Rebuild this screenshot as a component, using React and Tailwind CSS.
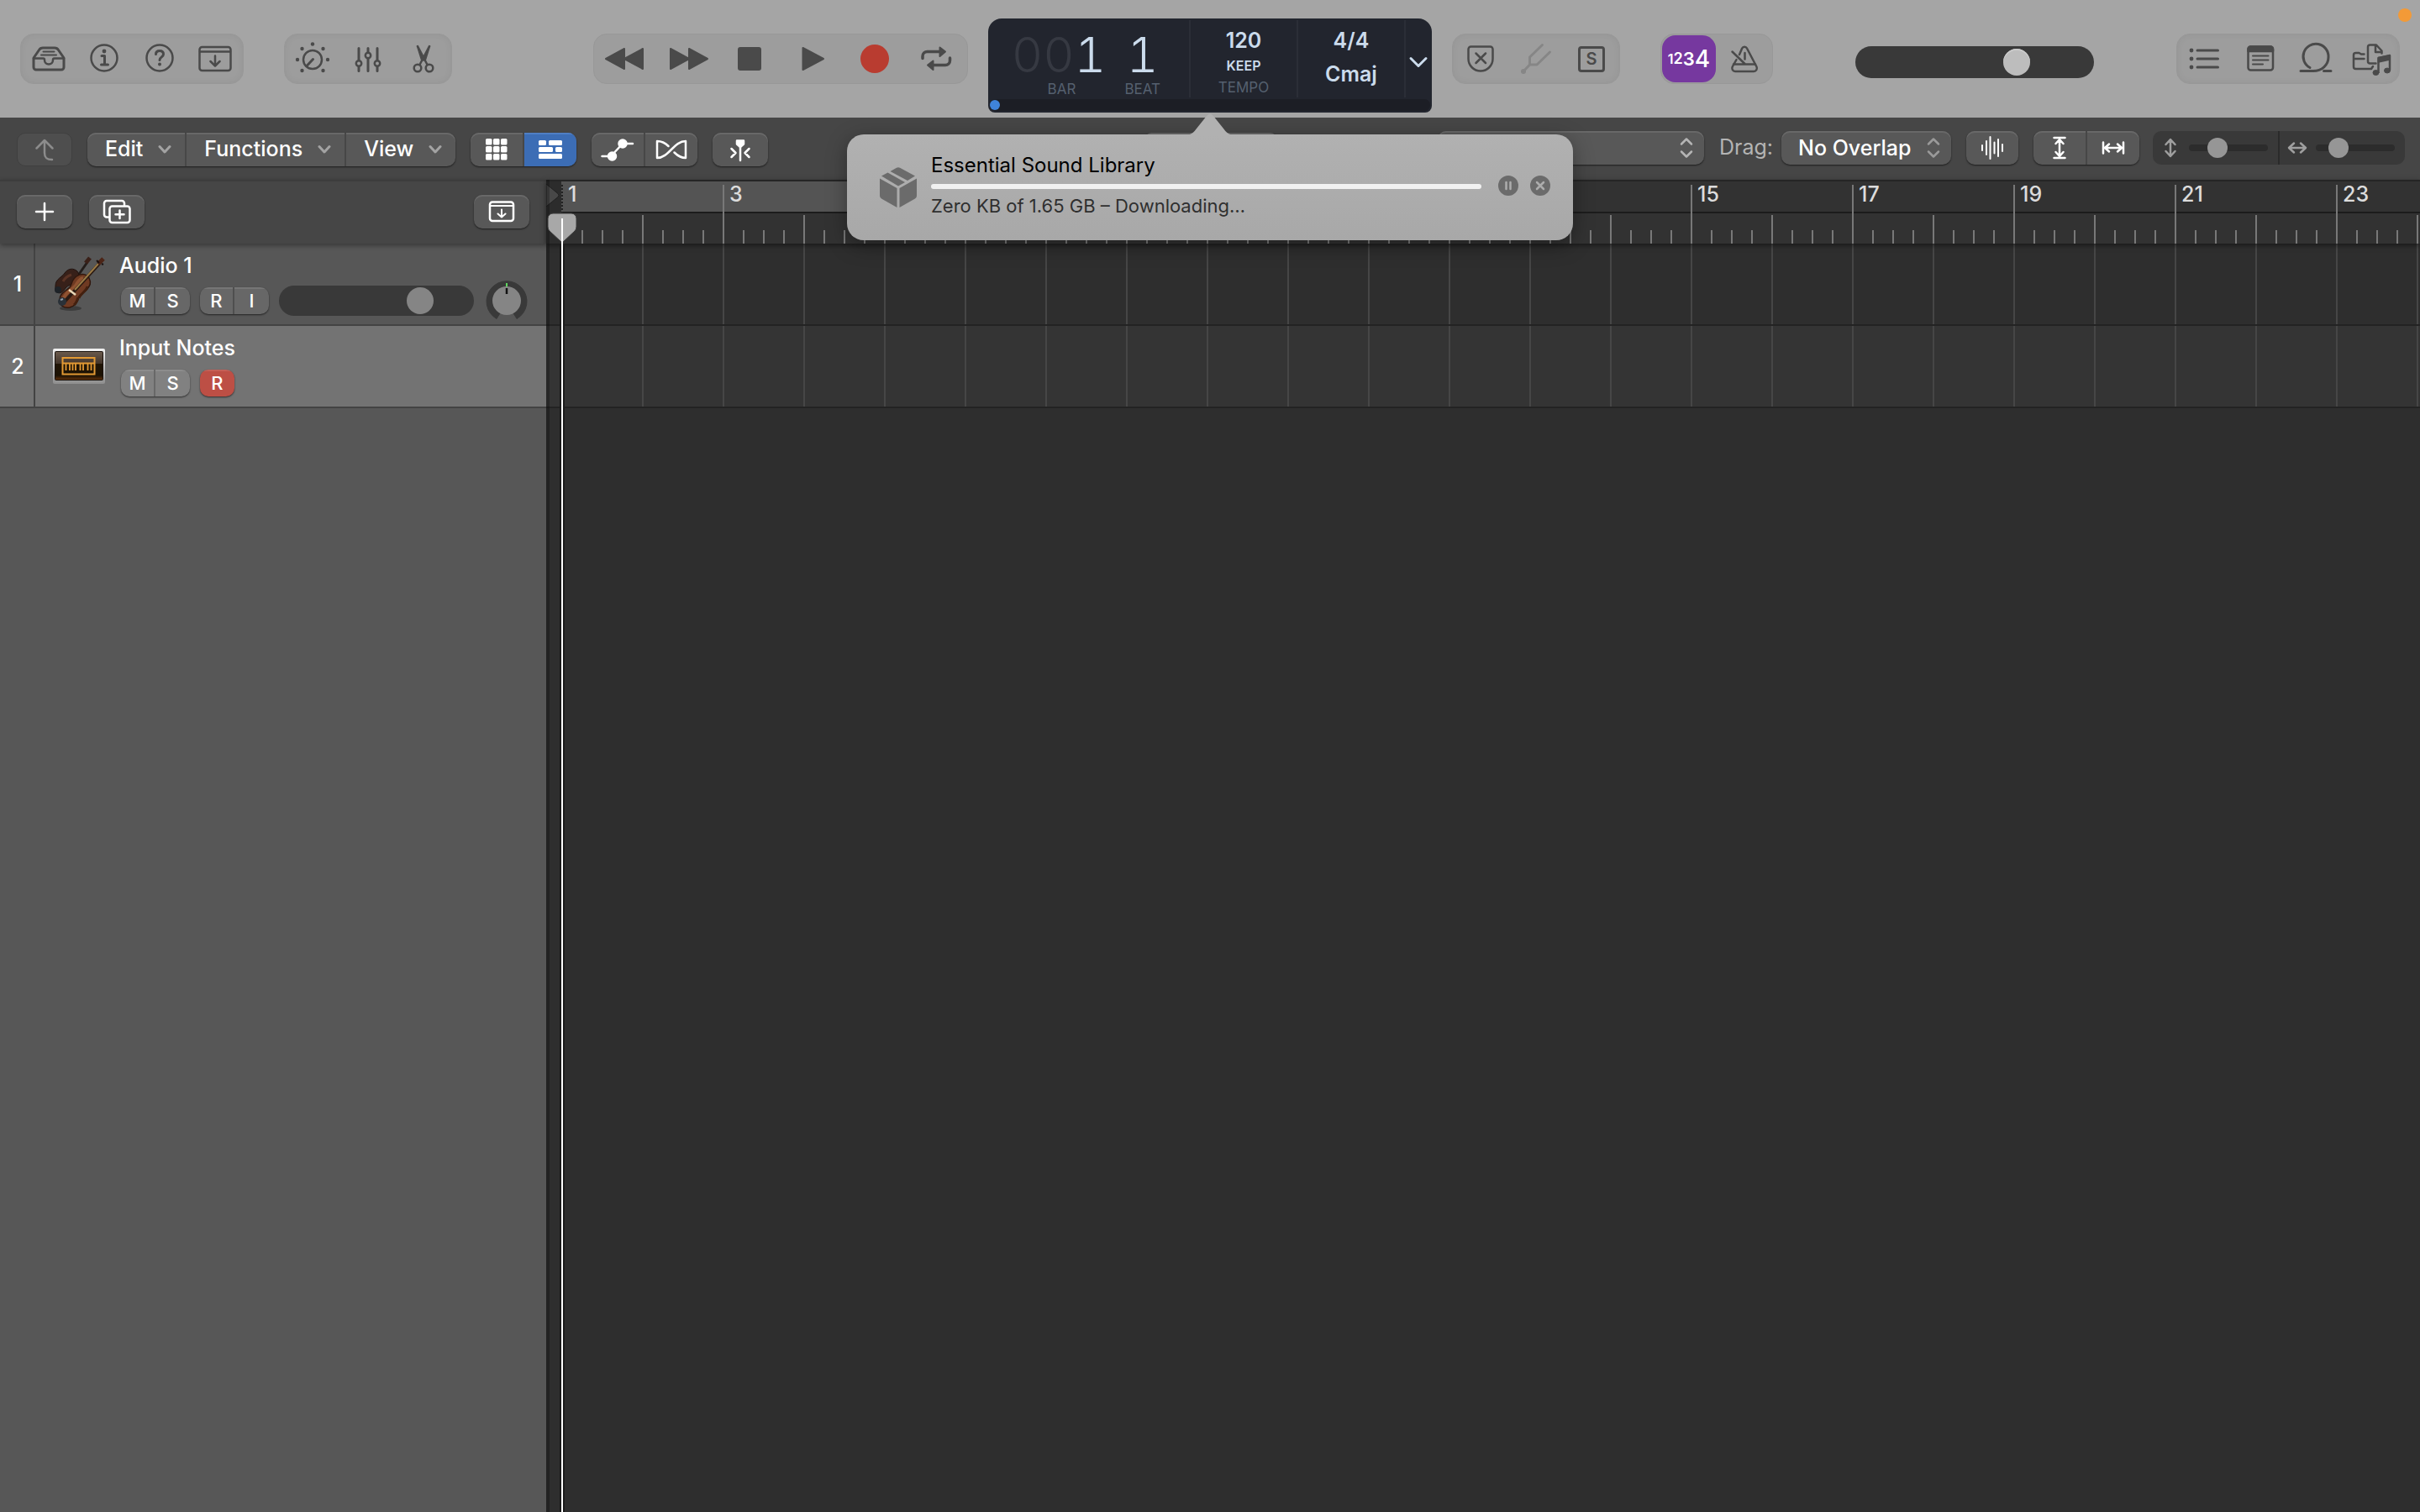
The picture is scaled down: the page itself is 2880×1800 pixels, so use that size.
import { useState } from "react";

const BARS = Array.from({ length: 24 }, (_, i) => i + 1);
const CYCLE_END = 8;
// bars whose labels sit under the download popover
const COVERED = [5, 7, 9, 11, 13];

const Icon = ({ children, w = 44, h = 44, stroke = 3, className = "" }) => (
  <svg
    width={w}
    height={h}
    viewBox={`0 0 ${w} ${h}`}
    fill="none"
    stroke="currentColor"
    strokeWidth={stroke}
    strokeLinecap="round"
    strokeLinejoin="round"
    className={`shrink-0 ${className}`}
    aria-hidden="true"
  >
    {children}
  </svg>
);

const InboxIcon = () => (
  <Icon>
    <path d="M4 21 10.5 11.5Q12 9 15 9H29Q32 9 33.5 11.5L40 21V32a3 3 0 0 1-3 3H7a3 3 0 0 1-3-3Z" />
    <path d="M4 21.5H15.5c1 0 1.5.8 1.5 2a5 5 0 0 0 10 0c0-1.2.5-2 1.5-2H40" strokeWidth="2.5" />
    <path d="M15.5 13.5H28.5M13 17.5H31" strokeWidth="2" />
  </Icon>
);

const InfoIcon = () => (
  <Icon>
    <circle cx="22" cy="21" r="15.5" strokeWidth="2.5" />
    <circle cx="22" cy="13" r="2.4" fill="currentColor" stroke="none" />
    <path d="M19 18.5h3.5V29M18.5 29h8" />
  </Icon>
);

const HelpIcon = () => (
  <Icon>
    <circle cx="22" cy="21" r="15.5" strokeWidth="2.5" />
    <path d="M17.5 16.5c0-2.5 1.8-4 4.5-4s4.5 1.6 4.5 4c0 3.5-4.5 3.3-4.5 7" />
    <circle cx="22" cy="28.5" r="2" fill="currentColor" stroke="none" />
  </Icon>
);

const DownloadWindowIcon = () => (
  <Icon stroke={2.5}>
    <rect x="3.5" y="8" width="37" height="28" rx="3" />
    <path d="M4 13.5H40M22 18.5V30M16.5 25 22 30.5 27.5 25" />
  </Icon>
);

const KnobIcon = () => (
  <Icon>
    <circle cx="22" cy="23" r="11" strokeWidth="2.5" />
    <path d="M22.5 22.5 15 30.5" />
    <g fill="currentColor" stroke="none">
      <circle cx="22" cy="4.5" r="2.2" />
      <circle cx="9.5" cy="10" r="2.2" />
      <circle cx="34.5" cy="10" r="2.2" />
      <circle cx="4" cy="23" r="2.2" />
      <circle cx="40" cy="23" r="2.2" />
      <circle cx="9.5" cy="36" r="2.2" />
      <circle cx="34.5" cy="36" r="2.2" />
    </g>
  </Icon>
);

const MixerIcon = () => (
  <Icon>
    <path d="M11 9.5V23M11 32v4.5M22 9.5v5M22 22V36.5M33 9.5V23M33 32v4.5" />
    <g strokeWidth="2.5">
      <circle cx="11" cy="27.5" r="3.2" />
      <circle cx="22" cy="18" r="3.2" />
      <circle cx="33" cy="27.5" r="3.2" />
    </g>
  </Icon>
);

const ScissorsIcon = () => (
  <Icon stroke={2.5}>
    <path d="M15 7 26.5 29M29 7 17.5 29" />
    <path d="M14.5 7 22.5 24 19.5 23ZM29.5 7 21.5 24 24.5 23Z" fill="currentColor" strokeWidth="1.5" />
    <circle cx="15" cy="33" r="4.3" />
    <circle cx="29" cy="33" r="4.3" />
  </Icon>
);

const RewindIcon = () => (
  <Icon w={52} stroke={2}>
    <path d="M25 10v24L3 22ZM47 10v24L25 22Z" fill="currentColor" />
  </Icon>
);

const ForwardIcon = () => (
  <Icon w={52} stroke={2}>
    <path d="M6 10v24l22-12ZM28 10v24l22-12Z" fill="currentColor" />
  </Icon>
);

const StopIcon = () => (
  <Icon>
    <rect x="8" y="8" width="28" height="28" rx="3" fill="currentColor" stroke="none" />
  </Icon>
);

const PlayIcon = () => (
  <Icon stroke={2}>
    <path d="M11.5 9v26L36 22Z" fill="currentColor" />
  </Icon>
);

const RecordIcon = () => (
  <Icon className="text-[#b93c30]">
    <circle cx="23" cy="22" r="17" fill="currentColor" stroke="none" />
  </Icon>
);

const CycleIcon = () => (
  <Icon stroke={3.5}>
    <path d="M6 21.5V19a5.5 5.5 0 0 1 5.5-5.5H26M38.5 21v3a5.5 5.5 0 0 1-5.5 5.5H19" />
    <path d="M26.5 8.5 33 13.5 26.5 19ZM18.5 24.5 12 29.5l6.5 5.5Z" fill="currentColor" strokeWidth="2" />
  </Icon>
);

const ShieldIcon = () => (
  <Icon stroke={2.5}>
    <path d="M10.5 7.5h23A3 3 0 0 1 36.5 10.5V22a14.5 14.5 0 0 1-29 0V10.5A3 3 0 0 1 10.5 7.5Z" />
    <path d="M16.5 15.5 28 27M28 15.5 16.5 27" />
  </Icon>
);

const TuningForkIcon = () => (
  <Icon className="text-[#868686]">
    <circle cx="7" cy="37" r="3" fill="currentColor" stroke="none" />
    <path d="M7 37 14.5 29V20L29.5 5.5M14.5 29H23L38.5 14" />
  </Icon>
);

const MetronomeIcon = () => (
  <Icon stroke={2.5}>
    <path d="M16 17 19.2 9.5a3.2 3.2 0 0 1 5.8 0L36.5 31.5a3.8 3.8 0 0 1-3.3 5.5H11a3.8 3.8 0 0 1-3.3-5.5L12.5 23" />
    <path d="M9 28.5H35M7.5 13.5 22.5 28M22.5 15v7.5" />
  </Icon>
);

const ListIcon = () => (
  <Icon>
    <path d="M13 12H37.5M13 22H37.5M13 32H37.5" />
    <g fill="currentColor" stroke="none">
      <circle cx="6" cy="12" r="2.4" />
      <circle cx="6" cy="22" r="2.4" />
      <circle cx="6" cy="32" r="2.4" />
    </g>
  </Icon>
);

const NotepadIcon = () => (
  <Icon stroke={2.5}>
    <rect x="7.5" y="7.5" width="29.5" height="28" rx="3" />
    <path d="M7.5 13V10a3 3 0 0 1 3-2.5H34A3 3 0 0 1 37 10v3Z" fill="currentColor" />
    <path d="M13 18.5H31.5M13 23.5H31.5M13 28.5H25" strokeWidth="2" />
  </Icon>
);

const LoopIcon = () => (
  <Icon>
    <path d="M4 36.5H19c10 0 18-7 18-16.5a15 15 0 1 0-22 12.5M31.5 36.5H40" />
  </Icon>
);

const MediaIcon = () => (
  <Icon w={48} stroke={2.5}>
    <path d="M15.5 16.5H12L9.5 15H5.5A2.5 2.5 0 0 0 3 17.5V31.5A2.5 2.5 0 0 0 5.5 34H24l2-3M3 22H15.5" />
    <path d="M29.5 27.5H22.5A2.5 2.5 0 0 1 20 25V8a2.5 2.5 0 0 1 2.5-2.5H30L36.5 12.5V15.5M29 6v8H36.5" />
    <path d="M32.5 38V21L46 18V35" />
    <path d="M32.5 20.5 46 18v5L32.5 26Z" fill="currentColor" strokeWidth="1.5" />
    <ellipse cx="29.5" cy="38.5" rx="3.5" ry="3" fill="currentColor" strokeWidth="1" />
    <ellipse cx="43" cy="36" rx="3.5" ry="3" fill="currentColor" strokeWidth="1" />
  </Icon>
);

const ChevronDown = () => (
  <Icon w={16} h={12} className="text-[#a3a3a3]">
    <path d="M2 2.5 8 9l6-6.5" />
  </Icon>
);

const UpDown = ({ className }) => (
  <Icon w={18} h={28} stroke={2.5} className={`pointer-events-none absolute right-3 top-1/2 -translate-y-1/2 ${className}`}>
    <path d="M3 9.5 9 3.5l6 6M3 18.5l6 6 6-6" />
  </Icon>
);

const ViolinIcon = () => (
  <svg width="64" height="66" viewBox="0 0 64 66" aria-hidden="true" className="shrink-0">
    <path d="M24 33 42 7" stroke="#241d1a" strokeWidth="3" />
    <path d="M40 8 45 2" stroke="#3a2018" strokeWidth="5" />
    <path
      d="M4 35C4 27 12 25 15 20c4-6 11-6 15-2 4 5 0 8-3 12-4 5-8 4-11 8-3 5-7 7-10 5-3-2-2-5-2-8Z"
      fill="#372019"
      stroke="#21130f"
    />
    <path d="M13 30c2-4 7-7 10-8" stroke="#5a3325" strokeWidth="3" fill="none" />
    <circle cx="7" cy="40" r="4" fill="#1e2328" />
    <ellipse cx="22" cy="62" rx="13" ry="3" fill="#000" opacity=".3" />
    <path
      d="M9 52c0-8 7-10 12-15 3-4 2-9 8-13 6-4 12-3 15 2 3 6 1 9-2 13-3 4-7 4-10 9-1 6-4 11-11 13-7 1-12-2-12-9Z"
      fill="#6f3a22"
      stroke="#30170d"
      strokeWidth="1.5"
    />
    <path d="M14 50c2-7 9-9 14-15 3-5 5-8 9-9" stroke="#9c5c38" strokeWidth="4" fill="none" opacity=".7" />
    <path d="M32 50c1-5 9-8 10-14M26 58c3-2 4-6 5-9" stroke="#43200f" strokeWidth="3" fill="none" />
    <path d="M15 54 56 9" stroke="#2b1a12" strokeWidth="4" />
    <path d="M27 40 55 9" stroke="#9a7a45" strokeWidth="2" />
    <path d="M20 40l8 6" stroke="#ead9b8" strokeWidth="2.5" />
    <path d="M55 9 61 3" stroke="#4c2416" strokeWidth="5" />
    <path d="M53 5l3 3M59 9l2 1" stroke="#1a1210" strokeWidth="2" />
    <circle cx="12" cy="54" r="5" fill="#2a3138" />
    <path d="M10 52l3-1" stroke="#8d9aa6" strokeWidth="2" />
  </svg>
);

const SynthIcon = () => (
  <svg width="64" height="44" viewBox="0 0 64 44" aria-hidden="true" className="shrink-0">
    <defs>
      <linearGradient id="frame" x1="0" y1="0" x2="0" y2="1">
        <stop offset="0" stopColor="#f2f2f2" />
        <stop offset="1" stopColor="#8d8d8d" />
      </linearGradient>
      <linearGradient id="screen" x1="0" y1="0" x2="0" y2="1">
        <stop offset="0" stopColor="#6a5a4c" />
        <stop offset=".42" stopColor="#42342a" />
        <stop offset=".43" stopColor="#211506" />
        <stop offset=".85" stopColor="#1c1204" />
        <stop offset="1" stopColor="#5c2f0c" />
      </linearGradient>
    </defs>
    <rect x="1" y="1" width="62" height="42" rx="2" fill="url(#frame)" />
    <rect x="3" y="4" width="58" height="35" rx="2" fill="#1a120c" />
    <rect x="4" y="5" width="56" height="33" rx="1" fill="url(#screen)" />
    <g stroke="#e39a34" fill="none" strokeWidth="2">
      <rect x="12.5" y="12" width="38" height="19.5" />
      <path d="M12 18.5H51" />
      <path d="M16.5 19v8M21 19v8M24.5 19v8M28 19v8M33.5 19v8M37 19v8M42.5 19v8M46.5 19v8" strokeWidth="1.8" />
    </g>
  </svg>
);

const HeaderGroup = ({ items }) => (
  <div className="flex h-15 items-center rounded-2xl border border-[#989898] bg-[#9d9d9d] text-[#4a4a4a] shadow-[inset_0_0_8px_rgba(0,0,0,0.05)]">
    {items.map(([label, icon]) => (
      <button key={label} type="button" aria-label={label} className="flex h-full w-[66px] items-center justify-center">
        {icon}
      </button>
    ))}
  </div>
);

const face = "bg-[#585858] shadow-[inset_0_2px_0_#686868,0_1px_2px_rgba(0,0,0,0.6)]";

const ToolButton = ({ label, children, className = "" }) => (
  <button type="button" aria-label={label} className={`flex h-10 items-center justify-center text-white ${className}`}>
    {children}
  </button>
);

const MenuButton = ({ children }) => (
  <button type="button" className="flex h-10 items-center gap-[18px] pl-[21px] pr-4 text-[25px] font-medium text-white">
    {children}
    <ChevronDown />
  </button>
);

const ZoomSlider = ({ label, value, children }) => {
  const [zoom, setZoom] = useState(value);
  return (
    <label className="flex h-10 flex-1 items-center justify-center gap-2.5 pr-1 text-[#9f9f9f]">
      {children}
      <input
        type="range"
        aria-label={label}
        value={zoom}
        onChange={(e) => setZoom(e.target.value)}
        className="h-2 w-[94px] appearance-none rounded-full bg-[#2c2c2c] [&::-webkit-slider-thumb]:size-6 [&::-webkit-slider-thumb]:appearance-none [&::-webkit-slider-thumb]:rounded-full [&::-webkit-slider-thumb]:bg-[#969696]"
      />
    </label>
  );
};

const LCD = () => (
  <div className="mt-2 flex h-28 w-[528px] flex-col rounded-2xl rounded-b-lg bg-[#22252e] px-0.5 pb-0.5 pt-0.5 text-[#cbdbec]">
    <div className="flex h-[92px] divide-x-2 divide-[#2b2e37]">
      <div className="flex w-[239px] justify-end gap-[22px] pr-[34px]">
        <div className="flex flex-col items-end">
          <div className="mt-2 flex text-[58px] font-light leading-[66px] tabular-nums">
            <span className="text-[#363942]">00</span>
            <span>1</span>
          </div>
          <div className="pr-9 text-[17px] leading-4 text-[#55606f]">BAR</div>
        </div>
        <div className="flex flex-col items-center">
          <div className="mt-2 text-[58px] font-light leading-[66px] tabular-nums">1</div>
          <div className="text-[17px] leading-4 text-[#55606f]">BEAT</div>
        </div>
      </div>
      <div className="flex w-32 flex-col items-center">
        <div className="mt-2 text-[25px] font-semibold leading-8">120</div>
        <div className="mt-1 text-base font-semibold leading-5">KEEP</div>
        <div className="mt-2 text-[17px] leading-4 text-[#55606f]">TEMPO</div>
      </div>
      <div className="flex w-32 flex-col items-center pt-2 text-[25px] font-semibold">
        <div className="leading-8">4/4</div>
        <div className="mt-2 leading-8">Cmaj</div>
      </div>
      <button type="button" aria-label="Display mode" className="flex flex-1 items-center justify-center pt-2">
        <Icon w={24} h={16} className="text-[#cbdbec]">
          <path d="M3 3.5 12 12.5l9-9" />
        </Icon>
      </button>
    </div>
    <div className="mt-auto flex h-3.5 items-center rounded-lg bg-[#1c1e25]">
      <span className="size-3 rounded-full bg-[#3f83da]" />
    </div>
  </div>
);

const Header = () => {
  const [volume, setVolume] = useState(70);
  return (
    <header className="relative grid h-35 grid-cols-[1fr_auto_1fr] items-center gap-6 bg-[#a5a5a5] px-6">
      <div className="flex items-center gap-12">
        <HeaderGroup
          items={[
            ["Library", <InboxIcon />],
            ["Inspector", <InfoIcon />],
            ["Quick Help", <HelpIcon />],
            ["Toolbar", <DownloadWindowIcon />],
          ]}
        />
        <HeaderGroup
          items={[
            ["Smart Controls", <KnobIcon />],
            ["Mixer", <MixerIcon />],
            ["Editors", <ScissorsIcon />],
          ]}
        />
        <div className="ml-auto flex h-15 w-[446px] items-center rounded-2xl border border-[#989898] bg-[#9d9d9d] text-[#4a4a4a]">
          {[
            ["Rewind", <RewindIcon />],
            ["Forward", <ForwardIcon />],
            ["Stop", <StopIcon />],
            ["Play", <PlayIcon />],
            ["Record", <RecordIcon />],
            ["Cycle", <CycleIcon />],
          ].map(([label, icon]) => (
            <button key={label} type="button" aria-label={label} className="flex h-full flex-1 items-center justify-center">
              {icon}
            </button>
          ))}
        </div>
      </div>

      <div className="pt-2">
        <LCD />
      </div>

      <div className="flex items-center">
        <HeaderGroup
          items={[
            ["Replace", <ShieldIcon />],
            ["Tuner", <TuningForkIcon />],
            [
              "Solo",
              <span className="flex h-[31px] w-8 items-center justify-center rounded border-[3px] border-[#4a4a4a] text-xl font-semibold">
                S
              </span>,
            ],
          ]}
        />
        <div className="ml-12 flex h-15 w-[134px] items-center rounded-2xl border border-[#989898] bg-[#9d9d9d] pl-px text-[#4a4a4a]">
          <button
            type="button"
            aria-label="Count In"
            className="flex h-14 w-16 items-center justify-center rounded-2xl bg-[#76389f] font-semibold text-white"
          >
            <span className="text-base">1</span>
            <span className="text-lg">2</span>
            <span className="text-[22px]">3</span>
            <span className="text-[28px] font-medium">4</span>
          </button>
          <button type="button" aria-label="Metronome" className="flex h-full flex-1 items-center justify-center">
            <MetronomeIcon />
          </button>
        </div>
        <input
          type="range"
          aria-label="Master volume"
          value={volume}
          onChange={(e) => setVolume(e.target.value)}
          className="ml-[98px] mt-2 h-[38px] w-71 appearance-none rounded-full bg-[#393939] [&::-webkit-slider-thumb]:size-8 [&::-webkit-slider-thumb]:appearance-none [&::-webkit-slider-thumb]:rounded-full [&::-webkit-slider-thumb]:bg-[#bdbdbd] [&::-webkit-slider-thumb]:shadow-[inset_0_2px_0_#cacaca]"
        />
        <div className="ml-auto">
          <HeaderGroup
            items={[
              ["List Editors", <ListIcon />],
              ["Note Pads", <NotepadIcon />],
              ["Apple Loops", <LoopIcon />],
              ["Browsers", <MediaIcon />],
            ]}
          />
        </div>
      </div>
      <span className="absolute right-2.5 top-2.5 size-4 rounded-full bg-[#f39a37]" />
    </header>
  );
};

const Toolbar = () => (
  <div className="grid h-[74px] grid-cols-[1fr_auto_1fr] items-center bg-[#464646] pl-5 pr-[18px] pt-0.5">
    <div className="flex items-center gap-[18px]">
      <ToolButton label="Back" className="w-[66px] rounded-[10px] border border-[#404040] bg-[#4e4e4e]">
        <Icon h={40} stroke={2.5} className="text-[#8c8c8c]">
          <path d="M12.5 18.5 22 9l9.5 9.5M22 9.5V24c0 5.5 2 8 9 8" />
        </Icon>
      </ToolButton>
      <div className={`flex divide-x-2 divide-[#474747] overflow-hidden rounded-[10px] ${face}`}>
        <MenuButton>Edit</MenuButton>
        <MenuButton>Functions</MenuButton>
        <MenuButton>View</MenuButton>
      </div>
      <div className={`flex divide-x-2 divide-[#474747] overflow-hidden rounded-[10px] ${face}`}>
        <ToolButton label="Live Loops grid" className="w-16">
          <Icon w={28} h={28}>
            <g fill="currentColor" stroke="none">
              {[0, 9, 18].map((y) =>
                [0, 9, 18].map((x) => <rect key={`${x}-${y}`} x={x + 1} y={y + 1} width="7.5" height="7.5" rx="1.5" />)
              )}
            </g>
          </Icon>
        </ToolButton>
        <ToolButton label="Tracks view" className="w-[62px] bg-[#3c6db5] shadow-[inset_0_2px_0_#4f7fc4]">
          <Icon w={30} h={24}>
            <g fill="currentColor" stroke="none">
              <rect x="1" y="1" width="9" height="6" rx="1.5" />
              <rect x="13" y="1" width="16" height="6" rx="1.5" />
              <rect x="1" y="9" width="17" height="6" rx="1.5" />
              <rect x="21" y="9" width="8" height="6" rx="1.5" />
              <rect x="1" y="17" width="28" height="6" rx="1.5" />
            </g>
          </Icon>
        </ToolButton>
      </div>
      <div className={`flex divide-x-2 divide-[#474747] overflow-hidden rounded-[10px] ${face}`}>
        <ToolButton label="Automation" className="w-16">
          <Icon h={40} stroke={2.5}>
            <path d="M3.5 28H14L28 13H40" />
            <circle cx="15.5" cy="28" r="4.5" fill="currentColor" />
            <circle cx="28" cy="13" r="4.5" fill="currentColor" />
          </Icon>
        </ToolButton>
        <ToolButton label="Flex" className="w-[62px]">
          <Icon h={40} stroke={2.5}>
            <path d="M5 10V30C19 30 25 10 39 10V30C33 30 29 27 25.5 23.5M5 10c6 0 10 2.5 13.5 6" />
          </Icon>
        </ToolButton>
      </div>
      <ToolButton label="Catch playhead" className={`w-[66px] rounded-[10px] ${face}`}>
        <Icon h={40} stroke={2.5}>
          <path d="M18 9.5h8v4L22 17l-4-3.5Z" fill="currentColor" />
          <path d="M22 15V33M11.5 19l5 5-5 5M32.5 19l-5 5 5 5" />
        </Icon>
      </ToolButton>
    </div>

    <ToolButton label="Tools" className={`w-40 rounded-[10px] ${face}`} />

    <div className="flex items-center justify-end gap-[18px] pb-1">
      <div className="relative">
        <select aria-label="Snap" className={`h-10 w-[317px] appearance-none rounded-[10px] ${face}`} />
        <UpDown className="text-[#b5b5b5]" />
      </div>
      <div className="flex items-center gap-2.5">
        <label htmlFor="drag" className="text-[25px] text-[#b4b4b4]">
          Drag:
        </label>
        <div className="relative">
          <select
            id="drag"
            className={`h-10 w-[202px] appearance-none rounded-[10px] pl-5 text-[25px] font-medium leading-8 text-white ${face}`}
          >
            <option>No Overlap</option>
          </select>
          <UpDown className="text-[#9a9a9a]" />
        </div>
      </div>
      <ToolButton label="Waveform zoom" className={`w-[62px] rounded-[10px] ${face}`}>
        <Icon w={32} h={32} stroke={2}>
          <path d="M4 13v6M9 8v16M13.5 3v26M18.5 9.5v13M23 6v20M28 12v8" />
        </Icon>
      </ToolButton>
      <div className="flex items-center gap-4">
        <div className={`flex divide-x-2 divide-[#474747] overflow-hidden rounded-[10px] ${face}`}>
          <ToolButton label="Fit vertically" className="w-16">
            <Icon w={32} h={32} stroke={2.5}>
              <path d="M9.5 4h13M9.5 28h13M16 5.5v21M11.5 11 16 6l4.5 5M11.5 21l4.5 5 4.5-5" />
            </Icon>
          </ToolButton>
          <ToolButton label="Fit horizontally" className="w-[62px]">
            <Icon w={32} h={32} stroke={2.5}>
              <path d="M4 9.5v13M28 9.5v13M5.5 16h21M11 11.5 6 16l5 4.5M21 11.5l5 4.5-5 4.5" />
            </Icon>
          </ToolButton>
        </div>
        <div className="flex w-75 divide-x-2 divide-[#2a2a2a] rounded-[10px] bg-[#393939]">
          <ZoomSlider label="Vertical zoom" value={32}>
            <Icon w={24} h={28} stroke={2.5}>
              <path d="M12 4.5v19M6.5 10 12 4l5.5 6M6.5 18l5.5 6 5.5-6" />
            </Icon>
          </ZoomSlider>
          <ZoomSlider label="Horizontal zoom" value={22}>
            <Icon w={24} h={28} stroke={2.5}>
              <path d="M3 14h18M8 8.500 2 14l6 5.500M16 8.500l6 5.500-6 5.500" />
            </Icon>
          </ZoomSlider>
        </div>
      </div>
    </div>
  </div>
);

const SmallButtons = ({ letters, selected, armed }) => (
  <div
    className={`flex overflow-hidden rounded-[10px] shadow-[0_1px_2px_rgba(0,0,0,0.6)] ${
      armed ? "bg-[#bd4f45]" : selected ? "divide-x-2 divide-[#686868] bg-[#818181]" : "divide-x-2 divide-[#4f4f4f] bg-[#676767]"
    }`}
  >
    {letters.map((letter) => (
      <button
        key={letter}
        type="button"
        className="h-8 w-[41px] text-[22px] font-medium leading-8 text-white shadow-[inset_0_2px_0_rgba(255,255,255,0.1)]"
      >
        {letter}
      </button>
    ))}
  </div>
);

const Track = ({ number, name, icon, selected, children }) => (
  <li
    className={`flex h-[98px] border-b-2 border-[#434343] text-white ${selected ? "bg-[#737373]" : "bg-[#575757]"}`}
  >
    <div className="flex w-[42px] items-center justify-center border-r-2 border-[#434343] pl-0.5 pt-0.5 text-[25px] font-medium">
      {number}
    </div>
    <div className="flex w-[100px] items-center pl-5">{icon}</div>
    <div className="flex flex-1 flex-col">
      <div className="mt-2.5 text-[25px] font-medium leading-8">{name}</div>
      <div className="flex h-[52px] items-center gap-3 pl-0.5">{children}</div>
    </div>
  </li>
);

const PanKnob = () => (
  <button type="button" aria-label="Pan" className="ml-0.5">
    <svg width="50" height="52" viewBox="0 0 50 52" aria-hidden="true">
      <path d="M13 47.5A24 24 0 1 1 37 47.5L32 39H18Z" fill="#393939" stroke="#393939" />
      <path d="M25 5v6" stroke="#5fd85f" strokeWidth="2" />
      <circle cx="25" cy="26" r="17" fill="#858585" />
      <path d="M25 11v7" stroke="#111" strokeWidth="2.5" />
    </svg>
  </button>
);

const TrackList = () => {
  const [volume, setVolume] = useState(76);
  return (
    <aside className="flex w-[650px] shrink-0 flex-col bg-[#575757]">
      <div className="relative flex h-[76px] items-center gap-5 border-t-2 border-[#3d3d3d] bg-[#464646] px-5 pb-0.5 shadow-[0_2px_6px_rgba(0,0,0,0.4)]">
        <ToolButton label="Add track" className={`w-[66px] rounded-[10px] ${face}`}>
          <Icon w={28} h={28} stroke={2.5}>
            <path d="M14 4v20M4 14h20" />
          </Icon>
        </ToolButton>
        <ToolButton label="Duplicate track" className={`w-[66px] rounded-[10px] ${face}`}>
          <Icon w={36} h={32} stroke={2.5}>
            <path d="M8 22.5H6A3 3 0 0 1 3 19.5V6A3 3 0 0 1 6 3H24A3 3 0 0 1 27 6V8" />
            <rect x="9.5" y="9.5" width="24" height="19.5" rx="3" />
            <path d="M21.5 14.5v9.5M16.5 19.3h10" />
          </Icon>
        </ToolButton>
        <ToolButton label="Track import" className={`ml-auto w-[66px] rounded-[10px] ${face}`}>
          <Icon w={32} h={28} stroke={2.5}>
            <rect x="2" y="2.5" width="28" height="22.5" rx="3" />
            <path d="M2.5 7H29.5M16 11.5V20M11.5 16.5 16 20.5l4.5-4" strokeWidth="2" />
          </Icon>
        </ToolButton>
      </div>
      <ul>
        <Track number={1} name="Audio 1" icon={<ViolinIcon />}>
          <SmallButtons letters={["M", "S"]} />
          <SmallButtons letters={["R", "I"]} />
          <input
            type="range"
            aria-label="Audio 1 volume"
            value={volume}
            onChange={(e) => setVolume(e.target.value)}
            className="h-9 w-58 appearance-none rounded-full bg-[#393939] [&::-webkit-slider-thumb]:size-8 [&::-webkit-slider-thumb]:appearance-none [&::-webkit-slider-thumb]:rounded-full [&::-webkit-slider-thumb]:bg-[#858585]"
          />
          <PanKnob />
        </Track>
        <Track number={2} name="Input Notes" icon={<SynthIcon />} selected>
          <SmallButtons letters={["M", "S"]} selected />
          <SmallButtons letters={["R"]} armed />
        </Track>
      </ul>
    </aside>
  );
};

const Ruler = () => (
  <div className="relative flex h-[76px] overflow-hidden border-t-2 border-[#252525] bg-[#323232] shadow-[0_2px_6px_rgba(0,0,0,0.5)]">
    <div className="w-[18px] shrink-0 bg-[#2c2c2c]">
      <svg width="18" height="38" viewBox="0 0 18 38" aria-hidden="true">
        <path d="M0 3 14 14.5Q16 16.5 14 18.5L0 30Z" fill="#484848" stroke="#222" />
      </svg>
    </div>
    {BARS.map((bar) => {
      const odd = bar % 2 === 1;
      return (
        <div key={bar} className="flex w-24 shrink-0 flex-col">
          <div className={`h-[38px] border-b-2 border-[#1c1c1c] ${bar <= CYCLE_END ? "bg-[#545454]" : ""}`}>
            {odd && (
              <div
                className={`mt-1 h-[34px] border-l-2 pl-1.5 text-[25px] font-medium leading-[22px] text-[#dcdcdc] ${
                  bar === 1 ? "border-dotted border-[#222]" : "border-[#787878]"
                }`}
              >
                {COVERED.includes(bar) ? null : bar}
              </div>
            )}
          </div>
          <div className="flex h-9 items-end">
            <span className={`w-6 border-l-2 border-[#787878] ${odd ? "h-9" : "h-[34px]"}`} />
            <span className="h-4 w-6 border-l-2 border-[#787878]" />
            <span className="h-4 w-6 border-l-2 border-[#787878]" />
            <span className="h-4 w-6 border-l-2 border-[#787878]" />
          </div>
        </div>
      );
    })}
  </div>
);

const Lane = ({ selected }) => (
  <div className={`flex h-[98px] overflow-hidden border-b-2 border-[#232323] pl-[18px] ${selected ? "bg-[#343434]" : "bg-[#2e2e2e]"}`}>
    {BARS.map((bar) => (
      <span key={bar} className="w-24 shrink-0 border-l-2 border-[#464646]" />
    ))}
  </div>
);

const Arrange = () => (
  <section className="relative min-w-0 flex-1 bg-[#2e2e2e]">
    <Ruler />
    <Lane />
    <Lane selected />
    <div className="absolute inset-y-0 left-0 w-1 bg-black/25" />
    {/* playhead */}
    <div className="absolute bottom-0 left-4 top-[76px] w-1.5 border-x-2 border-[#1a1a1a] bg-white" />
    <svg width="36" height="38" viewBox="0 0 36 38" className="absolute left-px top-[39px]" aria-hidden="true">
      <path d="M1 7A6 6 0 0 1 7 1H29A6 6 0 0 1 35 7V17Q35 20 33 22L18 36 3 22Q1 20 1 17Z" fill="#a8a8a8" stroke="#3a3a3a" />
      <path d="M18 7V38" stroke="#fff" strokeWidth="2" />
    </svg>
  </section>
);

const DownloadPopover = () => (
  <div
    role="dialog"
    aria-label="Essential Sound Library"
    className="absolute left-1/2 top-40 flex h-[126px] w-[864px] -translate-x-1/2 items-center rounded-[20px] bg-linear-to-b from-[#b1b1b1] to-[#a8a8a8] pl-[38px] pr-[27px] shadow-[0_6px_24px_rgba(0,0,0,0.35)]"
  >
    <svg width="60" height="27" viewBox="0 0 60 27" className="absolute -top-[26px] left-1/2 -translate-x-1/2" aria-hidden="true">
      <path d="M0 27C8 27 11 23 14 19L26 4Q30-1 34 4L46 19c3 4 6 8 14 8Z" fill="#b1b1b1" />
    </svg>
    <svg width="46" height="50" viewBox="0 0 46 50" fill="#6b6b6b" className="shrink-0" aria-hidden="true">
      <path d="M1 14.5 21.5 26V49L3 38.5Q1 37.5 1 35ZM45 14.5 24.5 26V49L43 38.5Q45 37.5 45 35Z" />
      <path d="M3 11.5 10.5 7.5 31 19l-8 4.5ZM13.5 6 21 1.8Q23 .8 25 1.8L43 11.5 34 17Z" />
    </svg>
    <div className="ml-4 flex-1 pb-1.5">
      <h2 className="text-[24px] leading-8 text-black">Essential Sound Library</h2>
      <div role="progressbar" aria-label="Download progress" className="my-1.5 h-1.5 rounded-full bg-[#f1f1f1]" />
      <p className="text-[22px] leading-7 text-[#2f2f2f]">Zero KB of 1.65 GB – Downloading…</p>
    </div>
    <div className="ml-5 flex gap-3.5 pb-1 text-[#adadad]">
      <button type="button" aria-label="Pause" className="flex size-6 items-center justify-center rounded-full bg-[#6b6b6b]">
        <Icon w={24} h={24} stroke={2.5}>
          <path d="M9.5 8v8M14.5 8v8" />
        </Icon>
      </button>
      <button type="button" aria-label="Cancel" className="flex size-6 items-center justify-center rounded-full bg-[#6b6b6b]">
        <Icon w={24} h={24} stroke={2.5}>
          <path d="M8 8l8 8M16 8l-8 8" />
        </Icon>
      </button>
    </div>
  </div>
);

const App = () => {
  return (
    <div className="relative flex min-h-screen flex-col overflow-hidden bg-[#2e2e2e] font-[Inter,'Liberation_Sans',sans-serif]">
      <Header />
      <Toolbar />
      <main className="flex flex-1">
        <TrackList />
        <Arrange />
      </main>
      <DownloadPopover />
    </div>
  );
};

export default App;
